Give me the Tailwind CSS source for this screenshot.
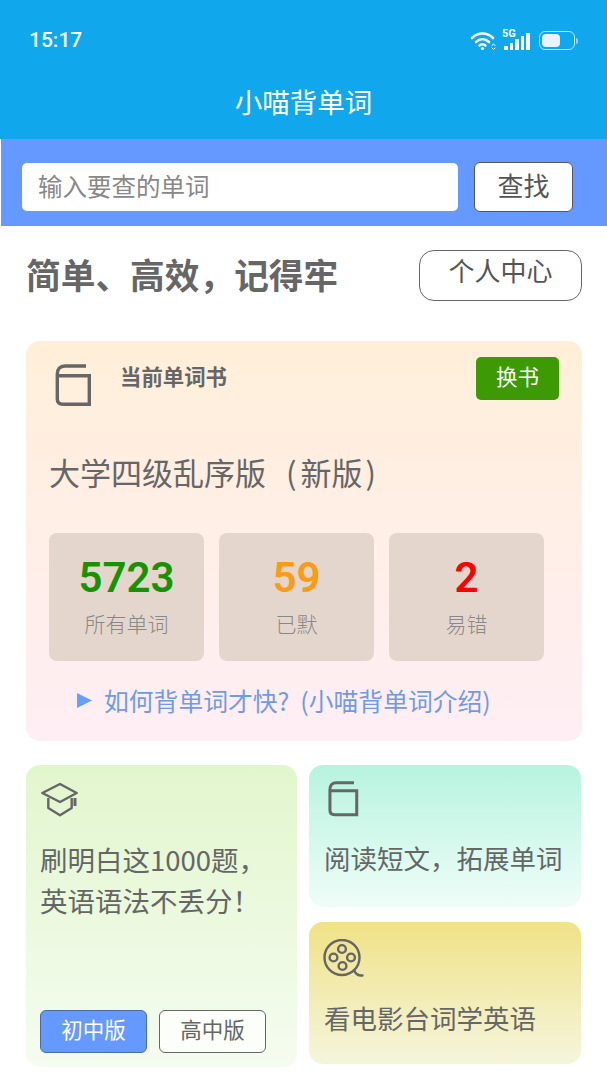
<!DOCTYPE html>
<html lang="zh-CN">
<head>
<meta charset="utf-8">
<title>小喵背单词</title>
<script src="https://cdn.jsdelivr.net/npm/@tailwindcss/browser@4"></script>
</head>
<body class="bg-white">
<div class="w-[607px] h-[1080px] overflow-hidden bg-white font-['Noto_Sans_CJK_SC','Noto_Sans',sans-serif] text-[#666]">

  <!-- App bar with system status row -->
  <header class="h-[139px] bg-[#10a7ec] text-white">
    <div class="h-[80px] pl-[29px] pr-[29px] pt-[26px] flex justify-between items-start">
      <span class="font-['Roboto',sans-serif] font-medium text-[21px] leading-[28px]">15:17</span>
      <div class="flex items-start">
        <svg class="mt-[5px]" width="26" height="20" viewBox="0 0 26 20" fill="none" stroke="#fff" stroke-linecap="round">
          <path d="M2 7C8 1 17 1 23 7" stroke-width="2.6"/>
          <path d="M6 11C10 7.300 15 7.300 19 11" stroke-width="2.6"/>
          <path d="M9.500 14.500C11.500 12.900 13.500 12.900 15.500 14.500" stroke-width="2.400"/>
          <circle cx="12.500" cy="17.500" r="1.600" fill="#fff" stroke="none"/>
          <path d="M22 14.500l1.500-1.500 1.500 1.500M22 17l1.500 1.500 1.500-1.500" stroke-width="1"/>
        </svg>
        <div class="relative ml-[6px] w-[30px] h-[26px]">
          <span class="absolute left-[0px] top-[3px] font-['Roboto',sans-serif] font-bold text-[11px] leading-[10px]">5G</span>
          <div class="absolute left-[2px] top-[7px] h-[17px] flex items-end gap-[2px]">
            <i class="block w-[3.500px] h-[4px] bg-white"></i>
            <i class="block w-[3.500px] h-[7px] bg-white"></i>
            <i class="block w-[3.500px] h-[11px] bg-white"></i>
            <i class="block w-[3.500px] h-[14px] bg-white"></i>
            <i class="block w-[3.500px] h-[17px] bg-white"></i>
          </div>
        </div>
        <div class="mt-[5px] ml-[7px] flex items-center gap-[1px]">
          <div class="w-[36px] h-[19px] rounded-[6px] border border-white/70 p-[2px]">
            <div class="w-[18px] h-full rounded-[4px] bg-[#e8f3fd]"></div>
          </div>
          <div class="w-[2px] h-[6px] rounded-r-[2px] bg-white/50"></div>
        </div>
      </div>
    </div>
    <h1 class="text-center text-[27.500px] leading-[42px] font-normal">小喵背单词</h1>
  </header>

  <!-- Word lookup -->
  <div class="ml-[1px] h-[87px] bg-[#6699ff] pl-[21px] pr-[34px] pt-[23px] flex items-start gap-[16px]">
    <div class="mt-[1px] w-[436px] h-[48px] rounded-[5px] bg-white pl-[16px] pb-[1px] flex items-center text-[24.500px] text-[#888]">输入要查的单词</div>
    <button class="w-[99px] h-[50px] rounded-[6px] bg-white border border-[#556] text-[26px] leading-[36px] text-[#555] pb-[4px]">查找</button>
  </div>

  <div class="px-[26px] pr-[25px]">
    <!-- Slogan row -->
    <div class="h-[115px] flex items-start justify-between">
      <h2 class="mt-[23px] text-[34.700px] leading-[50px] font-bold text-[#666]">简单、高效，记得牢</h2>
      <button class="mt-[24px] w-[163px] h-[51px] rounded-[15px] bg-white border border-[#666] text-[26px] leading-[34px] text-[#555] pb-[11px]">个人中心</button>
    </div>

    <!-- Current word book card -->
    <section class="h-[400px] rounded-[14px] bg-gradient-to-b from-[#ffefd9] to-[#ffeef4] pt-[16px] pl-[23px] pr-[23px]">
      <div class="h-[64px] flex items-start">
        <svg class="ml-[6px] mt-[7px]" width="37" height="43" viewBox="0 0 37 43" fill="none" stroke="#666" stroke-width="3.400">
          <path d="M31 2H10C5 2 2.300 5 2.300 10V35C2.300 38.500 4.500 40.300 8 40.300H34.300V11.700H2.300"/>
        </svg>
        <span class="ml-[28px] mt-[4px] text-[21.400px] leading-[30px] font-bold text-[#666]">当前单词书</span>
        <button class="ml-auto w-[83px] h-[43px] rounded-[5px] bg-[#3d9a04] text-white text-[21.500px] leading-[30px] pb-[5px]">换书</button>
      </div>
      <p class="mt-[29px] text-[31px] leading-[44px] text-[#666]">大学四级乱序版<span class="ml-[20px]">(</span><span class="ml-[4px]">新版</span><span class="ml-[3px]">)</span></p>
      <div class="mt-[39px] flex gap-[15px]">
        <div class="w-[155px] h-[128px] rounded-[8px] bg-[#e5d6cd] flex flex-col items-center pt-[22px]">
          <span class="font-['Roboto',sans-serif] text-[42px] leading-[46px] font-semibold text-[#179300]">5723</span>
          <span class="mt-[7px] text-[21px] leading-[30px] font-light text-[#888]">所有单词</span>
        </div>
        <div class="w-[155px] h-[128px] rounded-[8px] bg-[#e5d6cd] flex flex-col items-center pt-[22px]">
          <span class="font-['Roboto',sans-serif] text-[42px] leading-[46px] font-semibold text-[#ff9a14]">59</span>
          <span class="mt-[7px] text-[21px] leading-[30px] font-light text-[#888]">已默</span>
        </div>
        <div class="w-[155px] h-[128px] rounded-[8px] bg-[#e5d6cd] flex flex-col items-center pt-[22px]">
          <span class="font-['Roboto',sans-serif] text-[42px] leading-[46px] font-semibold text-[#ff0000]">2</span>
          <span class="mt-[7px] text-[21px] leading-[30px] font-light text-[#888]">易错</span>
        </div>
      </div>
      <div class="mt-[21px] ml-[28px] flex items-center text-[24.800px] leading-[36px] text-[#6f9be6]">
        <svg class="mr-[12px]" width="15" height="15" viewBox="0 0 15 15"><path d="M0 0L15 7.500L0 15Z" fill="#66a0ff"/></svg>
        <span>如何背单词才快?<span class="ml-[11px]">(</span>小喵背单词介绍)</span>
      </div>
    </section>

    <!-- Feature cards -->
    <div class="mt-[24px] flex gap-[12px]">
      <section class="relative w-[271px] h-[302px] rounded-[14px] bg-gradient-to-b from-[#e2f6cd] to-[#f5fcf0] pl-[15px] pt-[17px]">
        <svg width="37" height="35" viewBox="0 0 37 35" fill="none" stroke="#666" stroke-width="2.400" stroke-linejoin="round">
          <path d="M19 2L35.700 11L19 20L1.300 11Z"/>
          <path d="M7.300 16V26L19 33.300L30.700 26V16"/>
          <path d="M34 16V24" stroke-width="3"/>
        </svg>
        <p class="ml-[-1px] mt-[22px] text-[27.500px] leading-[41px] text-[#666]">刷明白这1000题，<br>英语语法不丢分！</p>
        <div class="absolute left-[14px] bottom-[14px] flex gap-[12px]">
          <button class="w-[107px] h-[43px] rounded-[6px] bg-[#6699ff] border border-[#4a6aa8] text-white text-[21.500px] leading-[30px] pb-[6px]">初中版</button>
          <button class="w-[107px] h-[43px] rounded-[6px] bg-white/70 border border-[#666] text-[#666] text-[21.500px] leading-[30px] pb-[6px]">高中版</button>
        </div>
      </section>
      <div class="w-[272px] flex flex-col gap-[15px]">
        <section class="h-[142px] rounded-[14px] bg-gradient-to-b from-[#b6f3df] to-[#effdf9] pl-[15px] pt-[16px]">
          <svg class="ml-[4px]" width="31" height="36" viewBox="0 0 37 43" fill="none" stroke="#666" stroke-width="3.600">
            <path d="M31 2H10C5 2 2.300 5 2.300 10V35C2.300 38.500 4.500 40.300 8 40.300H34.300V11.700H2.300"/>
          </svg>
          <p class="mt-[21px] text-[26.500px] leading-[40px] text-[#666]">阅读短文，拓展单词</p>
        </section>
        <section class="h-[142px] rounded-[14px] bg-gradient-to-b from-[#f0e285] to-[#f5f5dc] pl-[14px] pt-[17px]">
          <svg width="41" height="38" viewBox="0 0 41 38" fill="none" stroke="#666" stroke-width="2.400" stroke-linecap="round">
            <circle cx="19" cy="18.500" r="17.500"/>
            <path d="M31 31C32.500 35 35 37 39.500 36.500"/>
            <circle cx="19" cy="10" r="3.900"/>
            <circle cx="10.500" cy="18.500" r="3.900"/>
            <circle cx="28" cy="18.500" r="3.900"/>
            <circle cx="19.500" cy="27" r="3.900"/>
          </svg>
          <p class="ml-[1px] mt-[21px] text-[26.500px] leading-[40px] text-[#666]">看电影台词学英语</p>
        </section>
      </div>
    </div>
  </div>
</div>
</body>
</html>
